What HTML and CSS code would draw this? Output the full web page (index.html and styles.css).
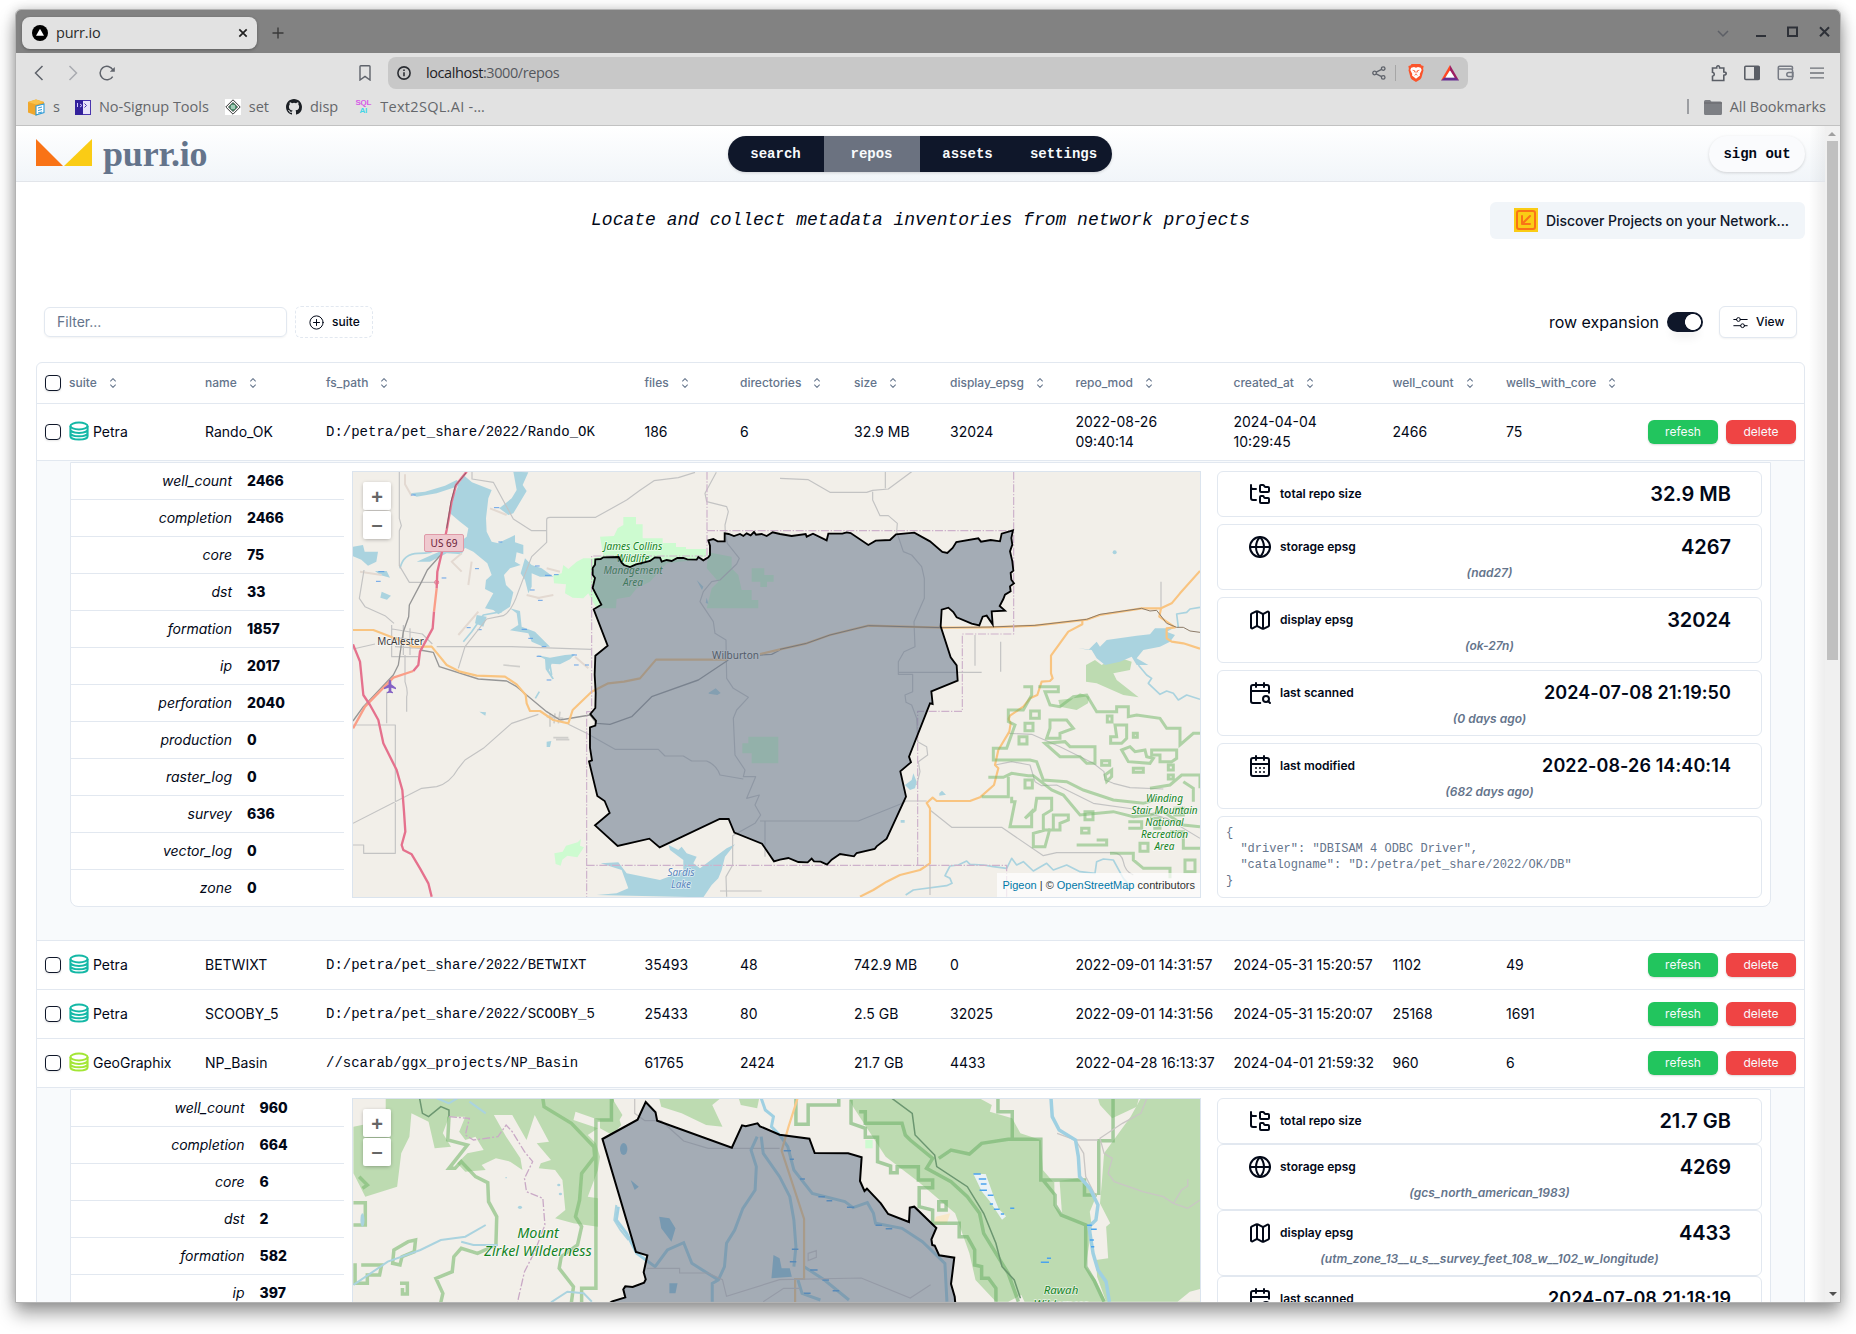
FILE: index.html
```html
<!DOCTYPE html>
<html lang="en">
<head>
<meta charset="utf-8">
<title>purr.io</title>
<link rel="stylesheet" href="styles.css">
</head>
<body>
<svg class="defs" aria-hidden="true">
  <symbol id="sort" viewBox="0 0 15 15"><path d="M5.2 5.7 7.5 3.4 9.8 5.7M5.2 9.3 7.5 11.6 9.8 9.3" fill="none" stroke="currentColor" stroke-width=".95" stroke-linecap="round" stroke-linejoin="round"/></symbol>
  <symbol id="db" viewBox="0 0 20 20"><g fill="none" stroke="currentColor" stroke-width="2"><ellipse cx="10" cy="5" rx="8.6" ry="3.4"/><path d="M1.4 5v10.3c0 1.9 3.8 3.3 8.6 3.3s8.6-1.4 8.6-3.3V5M1.4 8.6c0 1.9 3.8 3.3 8.6 3.3s8.6-1.4 8.6-3.3M1.4 12c0 1.9 3.8 3.3 8.6 3.3s8.6-1.4 8.6-3.3"/></g></symbol>
  <symbol id="tree" viewBox="0 0 24 24"><path d="M20 10a1 1 0 0 0 1-1V6a1 1 0 0 0-1-1h-2.5a1 1 0 0 1-.8-.4l-.9-1.2A1 1 0 0 0 15 3h-2a1 1 0 0 0-1 1v5a1 1 0 0 0 1 1ZM20 21a1 1 0 0 0 1-1v-3a1 1 0 0 0-1-1h-2.9a1 1 0 0 1-.88-.55l-.42-.85a1 1 0 0 0-.92-.6H13a1 1 0 0 0-1 1v5a1 1 0 0 0 1 1ZM3 5a2 2 0 0 0 2 2h3M3 3v13a2 2 0 0 0 2 2h3"/></symbol>
  <symbol id="globe" viewBox="0 0 24 24"><circle cx="12" cy="12" r="10"/><path d="M12 2a14.5 14.5 0 0 0 0 20 14.5 14.5 0 0 0 0-20M2 12h20"/></symbol>
  <symbol id="map" viewBox="0 0 24 24"><path d="M14.106 5.553a2 2 0 0 0 1.788 0l3.659-1.83A1 1 0 0 1 21 4.619v12.764a1 1 0 0 1-.553.894l-4.553 2.277a2 2 0 0 1-1.788 0l-4.212-2.106a2 2 0 0 0-1.788 0l-3.659 1.83A1 1 0 0 1 3 19.381V6.618a1 1 0 0 1 .553-.894l4.553-2.277a2 2 0 0 1 1.788 0zM15 5.764v15M9 3.236v15"/></symbol>
  <symbol id="calsearch" viewBox="0 0 24 24"><path d="M16 2v4M21 11.75V6a2 2 0 0 0-2-2H5a2 2 0 0 0-2 2v14a2 2 0 0 0 2 2h7.25M22 22l-1.875-1.875M3 10h18M8 2v4"/><circle cx="18" cy="18" r="3"/></symbol>
  <symbol id="caldays" viewBox="0 0 24 24"><rect x="3" y="4" width="18" height="18" rx="2"/><path d="M8 2v4M16 2v4M3 10h18M8 14h.01M12 14h.01M16 14h.01M8 18h.01M12 18h.01M16 18h.01"/></symbol>
</svg>

<div class="window">
  <div class="titlebar">
    <div class="tab">
      <svg width="16" height="16" viewBox="0 0 16 16"><circle cx="8" cy="8" r="8"/><path d="M8 3.8 12 10.8H4z" fill="#fff"/></svg>
      <span class="tab-title">purr.io</span>
      <svg width="10" height="10" viewBox="0 0 10 10"><path d="M1.3 1.3l7.4 7.4M8.7 1.3 1.3 8.7" stroke="#222" stroke-width="1.7"/></svg>
    </div>
    <svg class="newtab" width="12" height="12" viewBox="0 0 12 12"><path d="M6 .5v11M.5 6h11" stroke="#3a3a3a" stroke-width="1.4"/></svg>
    <div class="controls">
      <svg width="12" height="12" viewBox="0 0 12 12"><path d="M1 4l5 5 5-5" fill="none" stroke="#5c5f66" stroke-width="1.5"/></svg>
      <svg width="10" height="12" viewBox="0 0 10 12"><path d="M0 10h10" stroke="#2e3138" stroke-width="2"/></svg>
      <svg width="11" height="12" viewBox="0 0 11 12"><rect x="1" y="1.5" width="9" height="8.5" fill="none" stroke="#2e3138" stroke-width="2"/></svg>
      <svg width="11" height="12" viewBox="0 0 11 12"><path d="M1 1.2l9 9M10 1.2l-9 9" stroke="#2e3138" stroke-width="2"/></svg>
    </div>
  </div>

  <div class="toolbar">
    <div class="navbtns">
      <svg width="10" height="16" viewBox="0 0 10 16"><path d="M8.5 1 1.5 8l7 7" fill="none" stroke="#5f636b" stroke-width="1.5"/></svg>
      <svg width="10" height="16" viewBox="0 0 10 16"><path d="M1.5 1l7 7-7 7" fill="none" stroke="#a9abb0" stroke-width="1.5"/></svg>
      <svg width="16" height="16" viewBox="0 0 16 16"><path d="M13.7 11.6A6.8 6.8 0 1 1 14 5" fill="none" stroke="#5f636b" stroke-width="1.5"/><path d="M10.8 6.7h5V2z" fill="#5f636b"/></svg>
    </div>
    <svg class="bm-flag" width="12" height="16" viewBox="0 0 12 16"><path d="M1 1.6Q1 .8 1.8.8h8.4q.8 0 .8.8V15L6 11.4 1 15z" fill="none" stroke="#5f636b" stroke-width="1.4"/></svg>
    <div class="url">
      <svg width="14" height="14" viewBox="0 0 14 14"><circle cx="7" cy="7" r="6.1" fill="none" stroke="#2b2e33" stroke-width="1.6"/><path d="M7 6.2v4M7 3.6v1.4" stroke="#2b2e33" stroke-width="1.6"/></svg>
      <span class="addr">localhost<i>:3000/repos</i></span>
      <svg width="14" height="14" viewBox="0 0 14 14"><g fill="none" stroke="#5f636b" stroke-width="1.3"><circle cx="2.6" cy="7" r="1.8"/><circle cx="11.2" cy="2.6" r="1.8"/><circle cx="11.2" cy="11.4" r="1.8"/><path d="M4.2 6.2l5.4-2.8M4.2 7.8l5.4 2.8"/></g></svg>
      <span class="urlsep"></span>
      <svg width="16" height="18" viewBox="0 0 16 18"><path d="M3.6 0h8.8l1.2 1.5L15.6 2l-.5 3 .4 1.2-2 7.4q-.4 1.2-1.4 1.9L8 18l-4.100-2.500q-1-.7-1.400-1.900L.5 6.200.9 5 .4 2l2-.5z" fill="#fb542b"/><path d="M3.300 3.700 6 3l2 .7L10 3l2.700.7 1 2.400-2 3.900.3 1.400L8 14.800l-4-3.400.3-1.400-2-3.900z" fill="#fff"/><path d="M4.600 6.200l2.200.6-.6 1.600M11.400 6.200l-2.200.6.6 1.600M6.500 11.300 8 10.300l1.500 1M8 7v2.500" fill="none" stroke="#fb542b" stroke-width=".8"/></svg>
      <svg class="bat" width="18" height="16" viewBox="0 0 18 16"><path d="M9 0 0 15.600l3.700-2L9 5.500z" fill="#ff4724"/><path d="M9 0l9 15.600-3.700-2L9 5.500z" fill="#9e1f63"/><path d="M0 15.600h18l-3.700-3.200H3.700z" fill="#662d91"/><path d="M9 5.500l4.400 6.900H4.600z" fill="#fff"/></svg>
    </div>
    <div class="tools">
      <svg width="17" height="17" viewBox="0 0 17 17"><path d="M1.500 3h4.200q-.2-2.200 1.400-2.200T8.600 3h4.200v4q2.400 0 2.400 1.600t-2.400 1.600v5.300H1.500v-4.200q1.800-.4 1.800-2t-1.800-2z" fill="none" stroke="#5a5e66" stroke-width="1.600"/></svg>
      <svg width="16" height="16" viewBox="0 0 16 16"><rect x=".8" y="1.300" width="14.400" height="13.200" rx="1" fill="none" stroke="#5a5e66" stroke-width="1.600"/><path d="M10 1.500h5.500v13H10z" fill="#5a5e66"/></svg>
      <svg width="17" height="16" viewBox="0 0 17 16"><path d="M15.500 4V2.700q0-1.400-1.400-1.400H2.700q-1.400 0-1.400 1.400v10.500q0 1.400 1.400 1.400h11.400q1.400 0 1.400-1.400V5q0-1-1.400-1H2M16 7.500h-4.200q-2 0-2 2t2 2H16z" fill="none" stroke="#777b84" stroke-width="1.500"/></svg>
      <svg width="14" height="12" viewBox="0 0 14 12"><path d="M0 1.200h14M0 6h14M0 10.800h14" stroke="#6d7178" stroke-width="1.300"/></svg>
    </div>
  </div>

  <div class="bookmarks">
    <div class="bm"><svg width="17" height="17" viewBox="0 0 17 17"><path d="M0 3 8 .5l8 2.500v10l-8 3.500-8-3z" fill="#f0a72c"/><path d="M0 3l8 2.500 8-2.500L8 .5z" fill="#f9c24c"/><path d="M8 7l8-2v8.500l-8 2.500z" fill="#fff" stroke="#2f9bd8" stroke-width="1.100"/><path d="M10 9l4-1M10 11.500l4-1M10 14l4-1" stroke="#2f9bd8"/></svg><span>s</span></div>
    <div class="bm b2"><svg width="16" height="15" viewBox="0 0 16 15"><rect x=".5" y=".5" width="15" height="14" fill="#e9e5fb" stroke="#4a35ae"/><path d="M0 0h8v15H0z" fill="#33219c"/><path d="M2.500 3v4M5 4l2 1.500L5 7" stroke="#cfc6ff" fill="none"/><path d="M9.500 3.500 11.500 5.500 9.500 7.500" stroke="#4a35ae" fill="none"/></svg><span>No-Signup Tools</span></div>
    <div class="bm b3"><svg width="16" height="16" viewBox="0 0 16 16"><path d="M0 0h16v16H0z" fill="#fff"/><path d="M8 .8 15.200 8 8 15.200.8 8z" fill="none" stroke="#333"/><path d="M8 3.500 12.500 8 8 12.500 3.500 8z" fill="#4b9b72" stroke="#222" stroke-width=".8"/><path d="M6 7h4M6 9h4" stroke="#fff"/></svg><span>set</span></div>
    <div class="bm b4"><svg width="16" height="16" viewBox="0 0 16 16"><path d="M8 0C3.580 0 0 3.580 0 8c0 3.540 2.290 6.530 5.470 7.590.4.070.55-.17.55-.38v-1.490c-2.010.37-2.530-.49-2.690-.94-.09-.23-.48-.94-.82-1.130-.28-.15-.68-.52-.01-.53.63-.01 1.080.58 1.230.82.720 1.210 1.870.87 2.330.66.070-.52.280-.87.510-1.070-1.780-.2-3.640-.89-3.640-3.950 0-.87.310-1.590.820-2.150-.08-.2-.36-1.020.08-2.120 0 0 .67-.21 2.200.82a7.400 7.400 0 0 1 4 0c1.530-1.040 2.200-.82 2.200-.82.440 1.100.160 1.920.080 2.120.510.560.820 1.270.820 2.150 0 3.070-1.870 3.750-3.650 3.950.290.250.540.730.540 1.480v2.200c0 .21.150.46.550.38A8 8 0 0 0 16 8c0-4.420-3.580-8-8-8" fill="#1b1f24"/></svg><span>disp</span></div>
    <div class="bm b5"><div class="sqlai"><b>SQL</b><b>AI</b></div><span>Text2SQL.AI -…</span></div>
    <div class="bm-right"><span class="bar"></span><svg width="18" height="15" viewBox="0 0 18 15"><path d="M0 1.500Q0 0 1.500 0H6l1.500 1.500h9Q18 1.500 18 3v10.500q0 1.500-1.500 1.500h-15Q0 15 0 13.500z" fill="#7d7f84"/><path d="M0 3h18" stroke="#68696d"/></svg><span>All Bookmarks</span></div>
  </div>

  <div class="viewport">
    <div class="page">
      <header class="site">
        <div class="brand"><svg width="56" height="27" viewBox="0 0 56 27"><path d="M0 0 27 27H0z" fill="#f97316"/><path d="M56 0v27H28z" fill="#facc15"/></svg><span>purr.io</span></div>
        <nav><a>search</a><a class="on">repos</a><a>assets</a><a>settings</a></nav>
        <a class="signout">sign out</a>
      </header>

      <section class="intro">
        <p>Locate and collect metadata inventories from network projects</p>
        <button class="discover"><svg width="24" height="24" viewBox="0 0 24 24"><path d="M0 0h24v24H0z" fill="#facc15"/><g fill="none" stroke="#f97316" stroke-width="2" stroke-linecap="round" stroke-linejoin="round"><rect x="3" y="3" width="18" height="18" rx="2"/><path d="M16 8l-8 8M16 16H8V8"/></g></svg><span>Discover Projects on your Network...</span></button>
      </section>

      <section class="filters">
        <div class="input">Filter...</div>
        <button class="btn dashed"><svg width="15" height="15" viewBox="0 0 15 15"><g fill="none" stroke="currentColor" stroke-width="1" stroke-linecap="round"><circle cx="7.500" cy="7.500" r="6.600"/><path d="M7.500 4.500v6M4.500 7.500h6"/></g></svg><span>suite</span></button>
        <div class="right"><span class="rowexp">row expansion</span><span class="switch"></span>
        <button class="btn view"><svg width="15" height="15" viewBox="0 0 15 15"><g fill="none" stroke="currentColor" stroke-width="1" stroke-linecap="round"><circle cx="5.500" cy="4.500" r="1.900"/><circle cx="9.600" cy="10.700" r="1.900"/><path d="M.8 4.500h2.800M7.400 4.500h6.800M.8 10.700h6.900M11.500 10.700h2.700"/></g></svg><span>View</span></button></div>
      </section>

      <div class="table">
        <div class="row head">
          <span class="check"></span>
          <span>suite<svg><use href="#sort"/></svg></span><span>name<svg><use href="#sort"/></svg></span><span>fs_path<svg><use href="#sort"/></svg></span><span>files<svg><use href="#sort"/></svg></span><span>directories<svg><use href="#sort"/></svg></span><span>size<svg><use href="#sort"/></svg></span><span>display_epsg<svg><use href="#sort"/></svg></span><span>repo_mod<svg><use href="#sort"/></svg></span><span>created_at<svg><use href="#sort"/></svg></span><span>well_count<svg><use href="#sort"/></svg></span><span>wells_with_core<svg><use href="#sort"/></svg></span><span></span>
        </div>
        <div class="row tall">
          <span class="check"></span><span class="suite petra"><svg><use href="#db"/></svg>Petra</span><span>Rando_OK</span><span class="mono">D:/petra/pet_share/2022/Rando_OK</span><span>186</span><span>6</span><span>32.9 MB</span><span>32024</span><span>2022-08-26<br>09:40:14</span><span>2024-04-04<br>10:29:45</span><span>2466</span><span>75</span><span class="acts"><b class="refresh">refesh</b><b class="delete">delete</b></span>
        </div>

        <div class="expand">
          <div class="panel">
            <dl class="stats">
              <div><dt>well_count</dt><dd>2466</dd></div><div><dt>completion</dt><dd>2466</dd></div><div><dt>core</dt><dd>75</dd></div><div><dt>dst</dt><dd>33</dd></div><div><dt>formation</dt><dd>1857</dd></div><div><dt>ip</dt><dd>2017</dd></div><div><dt>perforation</dt><dd>2040</dd></div><div><dt>production</dt><dd>0</dd></div><div><dt>raster_log</dt><dd>0</dd></div><div><dt>survey</dt><dd>636</dd></div><div><dt>vector_log</dt><dd>0</dd></div><div><dt>zone</dt><dd>0</dd></div>
            </dl>
            <div class="mapbox">
              <svg class="tiles" viewBox="353 472 847 425" width="847" height="425">
                <g transform="translate(350 465) scale(.33333)" fill="none" stroke-linejoin="round">
                  <!-- nature reserves -->
                  <g fill="#cdfbd0"><path d="M820 156H858V178H878V220H938V234H978V246H1008V252H1068V274L1030 286 950 295 900 350 860 370 840 395 800 402 798 430H740L725 405 715 385 700 400 668 398 645 385 648 358 612 355 610 330 635 325 640 300 655 312 680 290 700 280H728L760 272 750 215 792 213 803 190 820 180z"/><path d="M613 1165l25-5 10-18 35-10 10-10-3 20 12 5-20 30-30-5-15 12-5 18-15-5z"/>
                  <path d="M1075 262 1145 275 1145 310 1165 330 1175 375H1205V405H1225V430H1070L1085 370 1105 350 1070 310zM1205 310h38v20h28v20h-20v16h-20v-16h-26zM1195 815h90v80h-80v-30h-28v-30h18z"/></g>
                  <g fill="#bddbb1"><path d="M2208 600 2235 585 2255 600 2300 575 2345 590 2340 615 2290 625 2300 645 2366 697 2320 690 2240 655 2208 650z"/>
                  <path d="M2125 705l45-5 20-15 28 10-4 20-34 20-50-10z"/></g>
                  <!-- lakes -->
                  <g fill="#aad3df">
                    <path d="M340 30 366 52 425 75 415 100 408 160 410 200 425 230 445 235 462 226 495 210 495 232 520 240 520 268 500 262 495 290 512 300 480 310 462 330 468 360 490 382 480 425 445 448 430 435 405 430 430 385 405 372 408 345 425 330 412 295 370 260 345 248 335 268 290 265 240 290 200 290 240 272 280 255 282 242 300 225 325 235 350 215 355 190 330 170 300 145 312 90z"/>
                    <path d="M490 20 535 22 518 60 530 78 490 145 475 150 448 130 485 100 500 75zM180 85 225 80 285 62 320 45 335 60 260 85 200 95zM525 280 545 300 575 310 610 335 570 335 545 325 545 365 535 385 525 345 512 325z"/>
                    <path d="M480 430 510 438 515 485 555 500 600 545 580 545 545 530 535 505 480 496 505 480 500 445zM560 570l40 8 45-8 30-2-15 15-30 15-25-2-8 20 15 25-5 2-20-30-2-30z"/>
                    <path d="M9 245l30-5 5 20 40 0-5 30-25 12-20-18-25-10zM95 380l28 12-12 12-20-6zM75 318l35 0 10 20-30-8zM388 740l20 2-2 10zM590 830l14-2-4 18-10 0zM380 450l30 5-10 30-25-10z"/>
                    <path d="M956 1140 985 1155 995 1145 1010 1165 1040 1175 1030 1195 1050 1210 1070 1195 1090 1180 1130 1150 1155 1138 1125 1175 1115 1215 1105 1240 1085 1260 1060 1297 740 1290 800 1285 835 1270 815 1215 752 1195 805 1192 830 1225 930 1245 970 1230 1000 1220 1000 1185 960 1155z"/>
                    <path d="M2185 549 2215 555 2240 530 2250 545 2270 525 2360 512 2400 508 2415 490 2470 490 2450 500 2475 510 2460 530 2430 545 2380 555 2360 580 2395 600 2360 600 2345 575 2310 590 2265 600 2240 580 2225 555z"/>
                    <path d="M1665 960l20-15 5-20 10 25-5 20-15 5zM1768 985l8-8 12 12-20 3zM1652 1065h12v8h-12z"/><circle cx="2294" cy="262" r="6"/>
                  </g>
                  <g stroke="#aad3df" stroke-width="5"><path d="M150 310Q160 265 205 265T250 255 290 262M455 440 400 450 365 500 340 530M600 600l5 30M556 700l12-20M2550 427 2520 432 2510 442 2480 447 2485 487M2365 600 2390 630 2405 640 2395 655 2430 688 2450 678 2470 685 2485 705 2510 690 2550 703M1667 1290 1690 1275 1790 1262 1806 1255 1800 1240 1785 1232 1800 1203 1825 1200 1850 1188 1860 1198 1900 1200 1930 1205 1970 1210 1985 1180 2000 1200 2020 1190 2050 1218 2090 1195 2110 1215 2150 1200 2190 1220 2235 1225 2240 1190 2260 1182 2290 1185 2320 1240 2340 1262"/></g>
                  <g stroke="#e3d9d1" stroke-width="6"><path d="M165 28v30l20 35M335 265l-30 25 30 30M30 320l65 10M365 290l-10 70M560 400l50-10M530 390l40 10M675 575l40 35M590 310l40 10M420 130l50 20M385 440l-60 70"/></g>
                  <g stroke="#4b93e8" stroke-width="2.500"><path d="M183 90h14M85 320h18M78 349h14M275 339h14M375 311h12M432 128h16M445 231h12M555 303h14M585 331h20M540 375h14M564 406h14M515 493h16M535 520h14M560 574h14M575 545h14M612 329h14M665 570h16M672 600h14M705 600h12M590 645h14M350 488h12M383 494h12"/></g>
                  <!-- minor roads -->
                  <g stroke="#c3c3c3" stroke-width="3.500">
                    <path d="M148 20V160L154 182 148 197V302L178 352H260M366 20V42L430 52 490 162 545 197H590V165Q590 157 600 157H737L830 105 870 76 912 47 985 38 1035 22M590 197V232L545 275 505 380Q485 440 460 452L410 462 345 545 325 610M260 545H485L723 553M42 315 28 400 45 425 105 452 132 475M9 1075 215 970 260 965Q300 955 325 910L345 885 400 850 485 775 565 748M9 1140H41V1165H136V780H9M110 680V775M165 570v80q10 30 5 45v45M125 480v95h80M160 480v90M180 490v80M127 492l90 15 30 30M135 518l90 10M135 545l80 5M655 778 710 805 795 853H925L945 873H1000L1025 888H1070Q1100 900 1110 930L1180 942"/>
                    <path d="M1099 22 1065 85 1070 110 1130 125 1135 140 1125 180 1126 205 1132 235 1168 280 1160 297 1110 345 1085 350 1060 380 1050 410 1090 470 1095 505 1128 525 1130 640 1150 670 1195 697 1160 735 1150 760 1155 870 1185 915 1180 935H1217L1190 1000 1228 990 1215 1020 1232 1050 1215 1075 1148 1112V1200L1128 1235 1130 1295M1290 40 1375 44 1440 82H1550L1568 76 1615 72 1685 20M1606 20V70M1568 80V105L1590 152 1615 152 1642 175 1640 200 1660 260 1685 270 1715 305 1723 340V400L1692 470 1695 545 1662 560 1645 590V628H1688V680L1665 690 1668 712 1685 720 1700 760 1703 830 1730 845 1733 870 1705 890 1710 920 1700 960"/>
                    <path d="M1645 622h250M1875 510v92M1952 530v90M2433 350v80M1230 1068H1525L1650 1018 1668 1008H1730M1740 1290V1200M1740 1035 1805 1087H1955L2080 1172 2120 1163H2290Q2315 1165 2320 1190 2325 1220 2350 1230M1975 805 2045 808 2130 845 2230 895 2262 920 2265 945 2290 955 2340 968 2440 972M1935 900 1985 890 2040 900 2055 950 2075 962 2120 960 2230 1015 2350 1032 2450 1060 2550 1120M1245 1175V1068M1110 1278H1235M9 552 75 537"/>
                  </g>
                  <g stroke="#cfcecb" stroke-width="5"><path d="M460 600l50 5M610 818h45M618 824h40M600 745v40M615 745l-3 30M630 740l-5 35M590 755l50 5"/></g>
                  <!-- railways -->
                  <path d="M272 270 232 315 215 350 178 420 176 455 160 500 145 600 130 630 40 725 9 768M210 555 250 562 268 605 385 642 470 648 500 665 590 740 630 765 720 750 740 775 780 778 845 755 905 695 1045 645 1135 585M1230 570 1265 568 1290 555" stroke="#969696" stroke-width="4"/>
                  <!-- primary roads -->
                  <g stroke="#f9c480" stroke-width="6.500"><path d="M9 495H70L140 522 190 545H245L290 600 330 620 380 632 465 635 500 658 527 690 530 715 540 738H570L610 765 655 775 668 735 725 680 775 655 822 650 870 640 918 584H1130M1230 567 1290 553 1370 535 1440 510 1555 482 1775 488 1920 487 2055 482 2210 464 2250 450 2375 430H2433L2465 415 2490 385 2550 318"/>
                  <path d="M2197 468V478L2155 500 2103 572V625L2108 640 2100 648 2075 650 2062 690 2040 700 2020 725 1980 752 1976 762 1982 775 1978 800 1945 855 1935 900 1945 910 1932 960 1890 997 1860 1008H1760L1748 998 1730 1014 1740 1030V1195L1710 1215 1650 1230 1610 1250 1570 1275 1530 1295M2433 430 2428 455 2475 487 2450 490 2450 520 2465 530 2500 535 2550 551"/></g>
                  <path d="M1290 553 1370 535 1440 510 1555 482 1775 488 1920 486 2055 481 2210 463 2250 448 2375 430 2400 438 2420 436 2450 475 2480 487 2500 487 2520 498 2550 502" stroke="#8c7a68" stroke-width="3"/>
                  <!-- trunk and motorway -->
                  <path d="M252 440 260 370M190 618 130 638 45 725 9 790" stroke="#fa9e88" stroke-width="7"/>
                  <path d="M350 20 318 60 305 110 290 195 275 265 262 320 260 370M252 440 248 490 210 560 205 600 190 618M9 538 30 590 40 690 60 720 85 765 100 835 140 915 157 975 162 1040 166 1100 155 1140 160 1155 185 1168 210 1210 235 1255 245 1295" stroke="#e5718d" stroke-width="7"/>
                  <path d="M348 24 316 62 303 110 290 190" stroke="#8d5c6a" stroke-width="3"/>
                  <circle cx="260" cy="352" r="6" stroke="#e5718d" stroke-width="3"/>
                  <!-- county limits -->
                  <g stroke="#cdb1cb" stroke-width="3.500" stroke-dasharray="24 5 4 5"><path d="M1071 20v253H725v467h-15v555M1071 197h919M1991 20v487h-154v232h-134v462M710 1201h1260v94"/></g>
                  <!-- national forest -->
                  <g stroke="#79b96f" stroke-opacity=".55" stroke-width="9" stroke-linejoin="miter">
                    <path d="M1895 995H1975V935M1915 937H1960L1985 925 2035 932H2050L2105 975 2140 990 2190 1050 2290 1040 2350 1055 2400 1050 2440 1040 2500 1080 2550 1085M2020 665H2045V690L2020 735H1975V770L1995 780 1970 850H1930V885H2040L2060 890 2080 945 2150 950 2200 975 2290 1005 2380 1015 2430 1000M2065 665H2125V680H2085L2100 720 2130 725 2170 695 2210 690 2240 740H2300V725H2335V755L2360 750 2430 760 2450 790H2490V840L2530 805H2550M1985 995V1010H1995L1980 1085H2045V1040L2025 1060 2055 1035 2060 1000H2105V1035L2080 1050V1095H2110V1050H2155V1065L2130 1075V1095H2085L2050 1105V1145H2085L2100 1090M2180 1140H2270V1125H2240M2280 1165H2350V1185L2380 1210H2460V1240"/>
                    <path d="M2042 738h26v22h-26zM2025 775h24v22h-24zM2007 815h24v22h-24zM2025 945h22v24h-22zM2100 765H2150L2170 790 2130 805V820H2090L2100 790zM2085 835 2145 830 2160 845H2235V895H2210L2190 875H2130zM2272 753h14v18h-14zM2295 780H2330V820L2315 835H2282V815H2300zM2315 855 2340 845 2355 860 2385 855 2390 875 2410 880 2400 895 2335 890zM2405 855H2480V880L2465 890H2430V870H2405zM2350 910h30v12h-30zM2255 887h24v14h-24zM2265 930 2285 915V935L2270 950zM2205 1040h24v24h-24zM2350 805h12v12h-12zM2195 1090h22v14h-22zM2335 1070h40v20h-40M2370 1135h24v24h-24zM2400 1060h30v30h-20M2470 1030h30v20h-30M2400 970 2460 960 2495 930H2550V970M2500 950 2530 970V1010M2460 1100H2500V1150H2550M2505 1185h30v35h-30zM2455 900h15v15h-15zM2455 930h15v12h-15z"/>
                  </g>
                  <path d="M120 644c-4 0-4 8-4 14l-14 10v5l14-5v10l-5 4v3l9-2 9 2v-3l-5-4v-10l14 5v-5l-14-10c0-6 0-14-4-14z" fill="#8461c4"/>
                  <path d="M1075 684l22-14 15 14-10 6-25-4zM1040 345l20 20-4 10zM1070 398l5 18-8-2zM1480 640l-8 18M1600 800l12 5" fill="#aad3df"/>
                </g>
                <g class="lbl green"><text x="633" y="549.500">James Collins</text><text x="633" y="561.500">Wildlife</text><text x="633" y="573.500">Management</text><text x="633" y="585.500">Area</text></g>
                <text class="lbl town" x="735.500" y="658.500">Wilburton</text>
                <path transform="translate(350 465) scale(.33333)" class="poly" d="M736 283l16-1 8-5 46-1 9 17 7 7 18 6 18-8 22-5 20-5 15-11 15 1 5 12 15-5 15 3 17-9h18l12 4 28 1 5-8 15 10 15-9 5-7v-28l-5-16 15-4 13 7h21v-24l12 2 16 6 18-6 10 6 10-8 12 6 10-10 6 8 17-2 15 6 18-11 22 5 35 6 42-6 3 8 19-9 41 20 5-20h42l13-4 12 2 53 36 22-13 43-2 18-17 55-5 47 26 37 32 15 3 16-15 11-18 66-11 8 10 29-5 28 4 5-23 34-10-5 23 3 20-7 20 7 30 3 28-8 7 2 20 8 11-12 9 2 15-17 10-5 13-11 21 16 14-40 2 3 39-18-26-12 3-10 26-23-5-45-19-10-16-15-13-20 6-3 50 30 93 18 24 3 46-79 32 4 38-8-2-63 160 6 17-32 27 17 76-58 126-30 23-6 8-54 12-8 10-42-7-25 17-14 15-19-9-20-1-7-8-12 11-28-1-30-12-25 5-18 5-36-53-83-33-17-41h-27l-180 85-31-26-95 22-68-62 44-37-15-36-22-15-25-104 9-3-6-37v-62l16-5 2-15-17-20 15-18 1-45-3-55 2-57 37-30-42-109 23-14-26-50 7-30-7-10v-20l7-10z"/>
                <g class="lbl town"><text x="400.500" y="645">McAlester</text></g>
                <g class="lbl lake"><text x="681" y="876">Sardis</text><text x="681" y="888">Lake</text></g>
                <g class="lbl green"><text x="1164.500" y="802">Winding</text><text x="1164.500" y="814">Stair Mountain</text><text x="1164.500" y="826">National</text><text x="1164.500" y="838">Recreation</text><text x="1164.500" y="850">Area</text></g>
                <rect x="424.500" y="534.500" width="39" height="17" rx="1.500" fill="#efc9cf" stroke="#df9aa8"/><text class="shield" x="444" y="547">US 69</text>
              </svg>
              <div class="zoom"><b>+</b><b>–</b></div>
              <div class="attr"><a>Pigeon</a> | © <a>OpenStreetMap</a> contributors</div>
            </div>
            <div class="cards">
              <div class="card"><div class="line"><svg><use href="#tree"/></svg><h4>total repo size</h4><strong>32.9 MB</strong></div></div>
              <div class="card"><div class="line"><svg><use href="#globe"/></svg><h4>storage epsg</h4><strong>4267</strong></div><em>(nad27)</em></div>
              <div class="card"><div class="line"><svg><use href="#map"/></svg><h4>display epsg</h4><strong>32024</strong></div><em>(ok-27n)</em></div>
              <div class="card"><div class="line"><svg><use href="#calsearch"/></svg><h4>last scanned</h4><strong class="date">2024-07-08 21:19:50</strong></div><em>(0 days ago)</em></div>
              <div class="card"><div class="line"><svg><use href="#caldays"/></svg><h4>last modified</h4><strong class="date">2022-08-26 14:40:14</strong></div><em>(682 days ago)</em></div>
              <pre class="card json">{
  "driver": "DBISAM 4 ODBC Driver",
  "catalogname": "D:/petra/pet_share/2022/OK/DB"
}</pre>
            </div>
          </div>
        </div>

        <div class="row"><span class="check"></span><span class="suite petra"><svg><use href="#db"/></svg>Petra</span><span>BETWIXT</span><span class="mono">D:/petra/pet_share/2022/BETWIXT</span><span>35493</span><span>48</span><span>742.9 MB</span><span>0</span><span>2022-09-01 14:31:57</span><span>2024-05-31 15:20:57</span><span>1102</span><span>49</span><span class="acts"><b class="refresh">refesh</b><b class="delete">delete</b></span></div>
        <div class="row"><span class="check"></span><span class="suite petra"><svg><use href="#db"/></svg>Petra</span><span>SCOOBY_5</span><span class="mono">D:/petra/pet_share/2022/SCOOBY_5</span><span>25433</span><span>80</span><span>2.5 GB</span><span>32025</span><span>2022-09-01 14:31:56</span><span>2024-05-31 15:20:07</span><span>25168</span><span>1691</span><span class="acts"><b class="refresh">refesh</b><b class="delete">delete</b></span></div>
        <div class="row"><span class="check"></span><span class="suite ggx"><svg><use href="#db"/></svg>GeoGraphix</span><span>NP_Basin</span><span class="mono">//scarab/ggx_projects/NP_Basin</span><span>61765</span><span>2424</span><span>21.7 GB</span><span>4433</span><span>2022-04-28 16:13:37</span><span>2024-04-01 21:59:32</span><span>960</span><span>6</span><span class="acts"><b class="refresh">refesh</b><b class="delete">delete</b></span></div>

        <div class="expand">
          <div class="panel">
            <dl class="stats wide">
              <div><dt>well_count</dt><dd>960</dd></div><div><dt>completion</dt><dd>664</dd></div><div><dt>core</dt><dd>6</dd></div><div><dt>dst</dt><dd>2</dd></div><div><dt>formation</dt><dd>582</dd></div><div><dt>ip</dt><dd>397</dd></div>
            </dl>
            <div class="mapbox">
              <svg class="tiles" viewBox="353 1099 847 425" width="847" height="425">
                <g transform="translate(0 880) scale(.40816 .33333)" class="nss" fill="none">
                  <!-- forest, west side -->
                  <path fill="#bddbb1" d="M945 655H1500L1525 705 1510 735 1480 725 1410 695 1405 720 1465 745 1440 765 1460 790 1470 830 1465 870 1440 950 1465 955 1465 1040 1405 1030 1360 1015 1385 990 1378 900 1360 870 1320 865 1325 850 1350 840 1315 790 1345 785 1310 705 1290 780 1255 705 1210 705 1240 770 1275 835 1280 870 1250 845 1215 835 1180 855 1190 870 1140 875 1120 850 1145 820 1185 810 1165 770 1140 780 1125 755 1140 710 1100 710 1085 760 1105 800 1065 805 1050 725 1008 700 1003 770 983 820 973 920 895 950 866 880V740L925 725 945 690z"/>
                  <g stroke="#79b96f" stroke-opacity=".6" stroke-width="3.500"><path d="M1100 710 1097 780 1145 795 1100 865 1115 865 1130 845 1165 890 1195 908 1197 965 1217 1010 1215 1095M1330 655 1333 680 1400 730 1455 800 1457 830 1425 880 1420 960 1410 1010 1425 1040 1415 1095 1375 1130 1370 1165 1405 1220 1400 1267M866 968H895V1035H866M1500 655V720H1460V1225H1425V1267M965 1110 1000 1085 1018 1080 1015 1115 985 1130 980 1155 962 1150zM980 1210h18v32h-12v-18M870 1150V1210H900V1185H930L935 1155H885M1215 1095 1170 1120 1130 1105 1112 1130 1108 1175 1068 1195 1085 1240 1080 1267M880 890 900 915 888 925"/></g>
                  <path d="M1028 655 1035 700 1050 710 1080 680 1100 690 1100 710" stroke="#6b9670" stroke-width="1.500"/>
                  <g stroke="#c9a9c6" stroke-width="1.300" stroke-dasharray="8 2 2 2"><path d="M1100 710l50 5-10 50 20 15 60-10 20-35 15 20 30 60 20 30-20 50 5 40 40 20 5 80-25 80-25 60-15 80-5 40 10 30"/></g>
                  <g stroke="#aad3df" stroke-width="2"><path d="M866 1215 950 1145 1030 1110 1080 1080 1140 1070 1190 1035M1130 1085 1160 1095 1220 1095M1350 1267 1390 1235 1430 1240 1450 1265M1510 975 1505 1020 1520 1050 1540 1080M1070 655l30 15 20-15M1150 665l40 35"/></g>
                  <g fill="#aad3df"><ellipse cx="888" cy="1020" rx="5" ry="20"/><circle cx="1274" cy="982" r="5"/><circle cx="1369" cy="915" r="4"/><circle cx="1373" cy="942" r="4"/><circle cx="1240" cy="893" r="2"/></g>
                </g>
                <g transform="translate(600 1080) scale(.40816 .33333)" class="nss" fill="none">
                  <!-- forest, east side -->
                  <g fill="#bddbb1"><path d="M0 55h30l22 80-22 30-30-20zM145 55h150l-20 20 25 65-40-5-60-35-50-20zM340 55h50l-5 30-40-10z"/>
                  <path d="M610 55H930L960 75 955 95 1010 115 1030 160 1080 180 1085 270 1110 305 1170 295 1217 345 1200 395 1205 440 1190 560 1215 600 1240 665H1040L1000 560 975 530 990 540 1025 600 1040 640 1000 665H970L920 600 905 520 870 400 780 305 700 230 620 80z"/><path d="M1220 55h100l-5 25-60 35-30-40z"/>
                  <path d="M1325 55H1470V665H1240L1218 590 1215 540 1245 535 1240 440 1250 430 1225 370 1230 300 1235 220 1300 110z"/></g>
                  <path d="M1113 305l13-2 6 100-18-25z" fill="#f2efe9"/>
                  <path d="M915 282h30l22 75 10 30 18 22-10 10-30-55-20-30z" fill="#eaf2f6"/>
                  <path d="M1415 665l30-30 25-8v38z" fill="#f2efe9"/>
                  <path d="M818 432l32-2 8-30-35 10z" fill="#f8e8c8"/><path d="M650 180h18v25h-18z" fill="#cdfbd0"/>
                  <g stroke="#6fb36b" stroke-opacity=".6" stroke-width="3.500"><path d="M0 120h28V55M480 55V133H510V75H585V55M615 60V130L650 145V172H680V245L712 258V278H728V260H780V300H815V323H782V380L815 390V430H880V470H900L918 510V555L935 560V595H952L970 625V665M635 95H650V130H740L748 165 760 180 815 235 800 265 860 305 900 350 930 400 940 460 970 520 1000 580 1025 665M830 235 860 210 905 222 935 190 1000 178H1080V300H1187V345H1217M975 55V95H1010V180M1085 300 1115 345V375L1130 405 1190 435V560L1210 600 1235 665M1257 55V182H1222V345M830 365h18v25h-18z"/></g>
                  <path d="M715 55 765 100 772 165 820 225 825 260 900 320 940 400 970 490 985 560 1015 600 1030 655" stroke="#6b9670" stroke-width="1.500"/>
                  <g stroke="#c9c6c4" stroke-width="1.300"><path d="M85 55V100L110 122H150L205 183 265 205H440M1340 55 1325 100 1280 130 1225 175 1235 220 1255 235 1245 280 1260 305 1330 335 1380 350 1405 370 1440 385 1470 360M1405 370 1425 330 1440 318V298M1120 160 1165 180H1220M1165 180 1185 220 1190 290 1215 350"/></g>
                  <path d="M1105 55 1108 110 1125 150 1165 180 1172 230 1175 290 1200 325 1220 375 1215 420 1198 440 1208 520 1220 570 1240 605 1248 665" stroke="#9fd0e2" stroke-width="3.500"/>
                  <g stroke="#9fd0e2" stroke-width="3"><path d="M395 55 405 90 425 110 420 140 440 165 460 200 475 270 520 340 600 365 620 383 655 368 670 400 675 430 740 445 790 485 845 550 850 665M385 170 370 210 383 260 380 330 350 385 330 450 310 490 305 560 290 600 275 610V665M395 170 400 220 440 290 465 350 475 420 480 500 475 560M45 380 40 420 65 460 90 520 135 560 165 510 205 488 225 550 290 600M500 560 550 600 610 660M485 600 495 640 540 660"/></g>
                  <g fill="#8fc6df"><ellipse cx="58" cy="207" rx="9" ry="18"/><path d="M75 300l20 20-10 10zM145 410l25 5 15 30-10 40-25-40zM425 525l15 10 5 30 20 0 5 25-50 5zM170 610h20l-5 30-15 0z"/></g>
                  <g stroke="#4aa3ee" stroke-width="1.500"><path d="M915 282h18M928 297h18M933 312h14M930 331h18M950 346h14M955 372h8M965 388h14M982 402h8M1005 385h10M1080 547h20M1095 535h10M1193 436h12M1203 448h14M1200 480h10M1203 500h8M450 212h18M465 238h10M490 297h12M535 350h16M555 362h14M605 382h18M675 436h16M700 446h16M470 508h16M465 545h16M515 570h18M545 600h16M570 632h16M500 640h16"/></g>
                  <path d="M484 55l-22 85-17 72 55 205v180h-22v70" stroke="#fbc98b" stroke-width="2.200"/>
                  <path d="M115 565h80v14h70l35 20 10 50 130-50 200-5 120 60 50-40M400 665l50-40h40M510 520l20-8v20l-20 10z" stroke="#d0c9c8" stroke-width="1.200"/>
                  <path class="poly" d="M6 177 92 119l20-53 24 31 4 25 183 81 25-67 9 3 29-9 6 9 48 25 73 12 13 43 82 1 33 12-4 71 11 30 6-7 34 44 18 32 51 24 2-43 11-3 54 64-12 34 2 17 6 2 11 29 37 7-8 79 9 38 5 70H-40l70-56 32-12-5-24 5-9 18 2 28-13 4-10-5-21 9-51-28-10z"/>
                </g>
                <g class="lbl green big"><text x="538" y="1237.500">Mount</text><text x="538" y="1255.500">Zirkel Wilderness</text></g>
                <g class="lbl green mid"><text x="1061" y="1294">Rawah</text><text x="1061" y="1308">Wilderness</text></g>
              </svg>
              <div class="zoom"><b>+</b><b>–</b></div>
            </div>
            <div class="cards">
              <div class="card"><div class="line"><svg><use href="#tree"/></svg><h4>total repo size</h4><strong>21.7 GB</strong></div></div>
              <div class="card"><div class="line"><svg><use href="#globe"/></svg><h4>storage epsg</h4><strong>4269</strong></div><em>(gcs_north_american_1983)</em></div>
              <div class="card"><div class="line"><svg><use href="#map"/></svg><h4>display epsg</h4><strong>4433</strong></div><em>(utm_zone_13__u_s__survey_feet_108_w__102_w_longitude)</em></div>
              <div class="card"><div class="line"><svg><use href="#calsearch"/></svg><h4>last scanned</h4><strong class="date">2024-07-08 21:18:19</strong></div><em></em></div>
            </div>
          </div>
        </div>
      </div>
    </div>
    <div class="scroll"><i class="up"></i><i class="thumb"></i><i class="down"></i></div>
  </div>
</div>
</body>
</html>
```
FILE: styles.css
```css
* { box-sizing: border-box; }
body { margin: 0; background: #fff; height: 1334px; overflow: hidden; font-family: Inter, sans-serif; color: #020817; font-size: 14px; padding: 9px 15px 0; }
.defs { position: absolute; width: 0; height: 0; }
button { font-family: inherit; color: inherit; margin: 0; }
svg { flex: none; display: block; }

.window { width: 1826px; height: 1294px; border: 1px solid #b3b3b3; border-radius: 6px 6px 0 0; display: flex; flex-direction: column; overflow: hidden; box-shadow: 0 11px 18px rgba(0,0,0,.36), 0 0 12px rgba(0,0,0,.18); background: #fff; }

/* browser chrome */
.titlebar, .toolbar, .bookmarks { font-family: "Open Sans", "Noto Sans", sans-serif; }
.titlebar { height: 43px; flex: none; background: #828282; display: flex; align-items: center; padding: 0 10px 0 6px; }
.tab { width: 235px; height: 32px; margin-top: 3px; border-radius: 8px; background: #e2e2e2; display: flex; align-items: center; padding: 0 9px 0 10px; box-shadow: 0 1px 3px rgba(0,0,0,.3); }
.tab-title { flex: 1; margin-left: 8px; font-size: 14.500px; letter-spacing: -.2px; color: #2b2b2b; position: relative; top: -1px; }
.newtab { margin: 3px 0 0 15px; }
.controls { margin-left: auto; display: flex; align-items: center; gap: 21px; }
.controls svg:first-child { margin-right: 6px; margin-top: 2px; }
.toolbar { height: 40px; flex: none; background: #e2e2e2; display: flex; align-items: center; padding-left: 18px; }
.navbtns { display: flex; gap: 24px; width: 335px; }
.navbtns svg:last-child { margin-left: -3px; }
.bm-flag { margin: 0 17px 0 -10px; }
.url { width: 1080px; height: 32px; border-radius: 8px; background: #c8c8c8; display: flex; align-items: center; padding: 0 9px; }
.addr { flex: 1; margin-left: 15px; font-size: 14.500px; letter-spacing: -.42px; color: #1f2226; position: relative; top: -1px; }
.addr i { font-style: normal; color: #55585e; }
.urlsep { width: 1px; height: 16px; background: #a6a6a6; margin: 0 12px 0 9px; }
.bat { margin-left: 17px; }
.tools { margin-left: auto; display: flex; align-items: center; gap: 16.500px; padding-right: 16px; }
.bookmarks { height: 33px; flex: none; background: #e2e2e2; border-bottom: 1px solid #c2c2c2; display: flex; align-items: center; padding: 0 14px 4px 12px; font-size: 14.500px; letter-spacing: -.02px; color: #65676b; white-space: nowrap; }
.bm { display: flex; align-items: center; gap: 8px; }
.bm > span, .bm-right > span { position: relative; top: -1px; }
.b2 { margin-left: 15px; } .b3 { margin-left: 16px; } .b4 { margin-left: 17px; } .b5 { margin-left: 17px; }
.b5 > span { letter-spacing: .3px; margin-left: 1px; }
.sqlai { width: 16px; display: flex; flex-direction: column; align-items: center; font: bold 8px/8px "Liberation Sans", sans-serif; letter-spacing: -.3px; }
.sqlai b:first-child { color: #d65ae6; } .sqlai b:last-child { color: #43d6e6; }
.bm-right { margin-left: auto; display: flex; align-items: center; }
.bm-right svg { margin: 0 8px 0 15px; }
.bar { width: 2px; height: 15px; background: #9c9ea2; }

/* page */
.viewport { flex: 1; min-height: 0; display: flex; overflow: hidden; }
.page { width: 1809px; flex: none; overflow: hidden; background: linear-gradient(to left, rgba(0,0,0,.07), rgba(0,0,0,0) 16px) #fff; }
.scroll { flex: 1; background: #f0f0f0; position: relative; }
.scroll i { position: absolute; }
.thumb { left: 2px; width: 11px; top: 15px; height: 519px; background: #c0c0c0; }
.up { left: 3px; top: 6px; border: 4px solid transparent; border-top: 0; border-bottom: 4px solid #a0a0a0; }
.down { left: 4px; bottom: 6px; border: 4px solid transparent; border-bottom: 0; border-top: 4px solid #505050; }

.site { height: 56px; border-bottom: 1px solid #e2e5ea; display: flex; align-items: center; justify-content: space-between; padding: 0 20px; background: linear-gradient(to left, rgba(0,0,0,.05), rgba(0,0,0,0) 16px), linear-gradient(#fff, #f1f5f9); }
.brand { width: 96px; display: flex; align-items: center; gap: 11px; color: #64748b; font: bold 36px/36px "Liberation Serif", serif; letter-spacing: -.2px; }
.brand svg { position: relative; top: -1px; }
.site nav { display: flex; border-radius: 18px; overflow: hidden; box-shadow: 0 1px 3px rgba(0,0,0,.15); position: relative; left: -1px; }
.site a { width: 96px; height: 36px; display: flex; align-items: center; justify-content: center; font: bold 14px "Liberation Mono", monospace; }
.site nav a { background: #0f172a; color: #f8fafc; }
.site nav a.on { background: #6b7280; }
.site .signout { border-radius: 18px; box-shadow: 0 1px 3px rgba(0,0,0,.15); background: #fafbfd; }

.intro { height: 108px; padding: 20px 20px 0; display: grid; grid-template-columns: 1fr 700px 1fr; align-items: start; }
.intro p { grid-column: 2; margin: 8px 0 0; text-align: center; font: italic 18px/20px "Liberation Mono", monospace; white-space: nowrap; }
.discover { justify-self: end; width: 315px; height: 37px; border: 0; border-radius: 6px; background: #f1f5f9; display: flex; align-items: center; gap: 8px; padding: 0 0 1px 24px; font-size: 14px; letter-spacing: -.06px; font-weight: 500; color: #0f172a; white-space: nowrap; }

.filters { height: 32px; margin: 16px 28px 24px; display: flex; align-items: center; }
.input { width: 243px; height: 30px; border: 1px solid #e2e8f0; border-radius: 6px; padding: 0 12px; line-height: 28px; color: #64748b; box-shadow: 0 1px 2px rgba(0,0,0,.05); }
.btn { height: 32px; border: 1px solid #e2e8f0; border-radius: 6px; background: #fff; display: flex; align-items: center; font-size: 12px; font-weight: 500; padding: 0 13px; gap: 8px; box-shadow: 0 1px 2px rgba(0,0,0,.05); }
.btn span { margin-top: -1px; }
.dashed { border-style: dashed; margin-left: 8px; width: 78px; box-shadow: none; }
.right { margin-left: auto; display: flex; align-items: center; }
.rowexp { font-size: 16px; margin-right: 8px; }
.switch { width: 36px; height: 20px; border-radius: 10px; background: radial-gradient(circle at 26px 10px, #fff 7.600px, #0f172a 8.300px); box-shadow: 0 10px 10px -4px rgba(0,0,0,.06); margin-right: 16px; }
.view { width: 78px; }

.table { margin: 0 20px; border: 1px solid #e2e8f0; border-radius: 6px 6px 0 0; height: 1200px; background: #fff; }
.row { display: grid; grid-template-columns: 24px 136px 121px 318.500px 95.500px 114px 96px 125.500px 158px 159px 113.500px 142px 1fr; align-items: center; height: 49px; border-bottom: 1px solid #e2e8f0; line-height: 20px; white-space: nowrap; }
.row > span { padding-left: 8px; }
.row.tall { height: 57px; }
.row.head { height: 41px; font-size: 12px; font-weight: 500; color: #64748b; }
.row.head > span { display: flex; align-items: center; gap: 8px; }
.row.head svg { width: 16px; height: 16px; }
.row > .check { width: 16px; height: 16px; margin-left: 8px; padding: 0; border: 1px solid #0f172a; border-radius: 4px; box-shadow: 0 1px 2px rgba(0,0,0,.1); }
.suite { display: flex; align-items: center; gap: 4px; }
.suite svg { width: 20px; height: 20px; margin-top: -2px; }
.petra svg { color: #14b8a6; } .ggx svg { color: #a3e635; }
.mono { font-family: "Liberation Mono", monospace; }
.acts { display: flex; gap: 8px; }
.acts b { width: 70px; height: 24px; border-radius: 6px; color: #f8fafc; font: 400 12px/24px Inter, sans-serif; text-align: center; box-shadow: 0 1px 2px rgba(0,0,0,.15); }
.refresh { background: #22c55e; } .delete { background: #ef4444; }

/* expanded row */
.expand { height: 480px; background: #f8fafc; border-bottom: 1px solid #e2e8f0; padding: 1px 33px 0; }
.panel { height: 445px; border: 1px solid #e2e8f0; border-radius: 0 0 8px 8px; background: #fff; display: grid; grid-template-columns: 273px 849px 544px; column-gap: 8px; }
.panel .cards { margin-left: 8px; width: 545px; }
.stats { margin: 0; }
.stats div { display: flex; height: 37px; align-items: center; border-bottom: 1px solid #e2e8f0; padding-bottom: 2px; }
.stats div:nth-child(12) { border: 0; }
.stats dt { width: 161px; text-align: right; font-style: italic; }
.stats dd { margin: 0 0 0 15px; font-weight: 800; }
.stats.wide dt { width: 173.500px; }
.mapbox { margin-top: 8px; width: 849px; height: 427px; border: 1px solid #dbe4ee; position: relative; background: #f2efe9; overflow: hidden; }
.nss path, .nss circle { vector-effect: non-scaling-stroke; }
.poly { fill: #64748b; fill-opacity: .55; stroke: #000; stroke-width: 5.500; stroke-linejoin: miter; }
.nss .poly { stroke-width: 2; }
.lbl { font-family: "Noto Sans", sans-serif; font-size: 10px; text-anchor: middle; paint-order: stroke; stroke: rgba(255,255,255,.6); stroke-width: 1.500px; }
.green { fill: #14841f; font-style: italic; }
.green.big { font-size: 14.400px; } .green.mid { font-size: 11.500px; }
.town { fill: #3d3d3d; font-size: 10px; }
.lake { fill: #5b86bd; font-style: italic; }
.shield { font: 10px "Noto Sans", sans-serif; fill: #6b2038; text-anchor: middle; }
.zoom { position: absolute; left: 10px; top: 10px; display: flex; flex-direction: column; gap: 1px; }
.zoom b { width: 28px; height: 28px; background: #fff; border-radius: 2px; box-shadow: 0 1px 4px -1px rgba(0,0,0,.4); font: bold 20px/30px "Liberation Sans", sans-serif; color: #666; text-align: center; }
.zoom b:last-child { line-height: 26px; }
.attr { position: absolute; right: 0; bottom: 0; height: 24px; padding: 0 5px; background: rgba(255,255,255,.7); font: 11px/24px "Liberation Sans", sans-serif; color: #333; white-space: nowrap; }
.attr a { color: #0078a8; }
.cards { margin-top: 8px; height: 427px; display: flex; flex-direction: column; justify-content: space-between; }
.stats.wide ~ .cards { justify-content: flex-start; gap: 0; }
.card { height: 66px; border: 1px solid #e2e8f0; border-radius: 6px; flex: none; margin: 0; }
.card:first-child { height: 46px; }
.line { display: flex; align-items: center; height: 44px; padding: 0 30px; }
.line svg { width: 24px; height: 24px; fill: none; stroke: currentColor; stroke-width: 2; stroke-linecap: round; stroke-linejoin: round; }
.line h4 { margin: -2px 0 0 8px; font-size: 12px; font-weight: 600; }
.line strong { margin-left: auto; font-size: 20px; font-weight: 600; }
.line .date { font-size: 18px; letter-spacing: .1px; margin-top: -1px; }
.card em { display: block; text-align: center; font-size: 12px; line-height: 16px; margin-top: -4px; font-weight: 600; color: #64748b; }
.json { height: 82px; padding: 8px; font: 12px/16px "Liberation Mono", monospace; color: #64748b; }
```
